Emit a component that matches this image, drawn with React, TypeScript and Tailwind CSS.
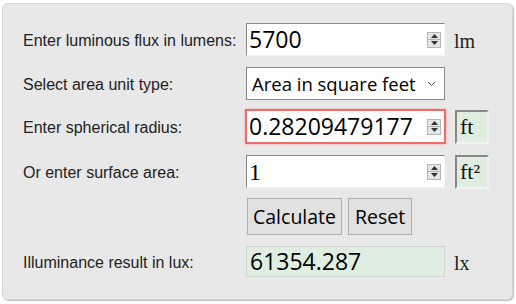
import { ReactNode } from 'react';

// Little up/down stepper like the native number input one
function Spinner() {
    return (
        <div className="flex h-[16px] w-[14px] flex-col border border-[#b5b5b5] bg-[#e6e6e6]">
            <div className="flex flex-1 items-center justify-center border-b border-[#b5b5b5]">
                <svg width="7" height="4" viewBox="0 0 7 4"><path d="M3.5 0L7 4H0z" fill="#333" /></svg>
            </div>
            <div className="flex flex-1 items-center justify-center">
                <svg width="7" height="4" viewBox="0 0 7 4"><path d="M0 0H7L3.5 4z" fill="#333" /></svg>
            </div>
        </div>
    );
}

function Label({ children }: { children: ReactNode }) {
    return <div className="w-[243px] shrink-0 pt-[3px] pl-[20px] text-[16px] text-[#222]">{children}</div>;
}

function Unit({ children }: { children: ReactNode }) {
    return <div className="pl-[9px] pt-[3px] font-['Liberation_Serif',serif] text-[20px] text-[#222]">{children}</div>;
}

function UnitBox({ children }: { children: ReactNode }) {
    return (
        <div className="ml-[10px] flex h-[34px] w-[34px] items-center border-2 border-t-[#888] border-l-[#888] border-r-[#f2f2f2] border-b-[#f2f2f2] bg-[#dfeee0] pl-[3px] font-['Liberation_Serif',serif] text-[22px] leading-none text-[#111]">
            {children}
        </div>
    );
}

function NumberBox({ value, focused, serif }: { value: string; focused?: boolean; serif?: boolean }) {
    return (
        <div
            className={
                focused
                    ? 'flex h-[35px] w-[201px] items-center -mx-[1px] border-2 border-[#f06a6a] bg-white pl-[2px] pr-[3px] shadow-[0_0_2px_#f4a0a0]'
                    : 'flex h-[33px] w-[199px] items-center border border-t-[#8a8a8a] border-l-[#8a8a8a] border-r-[#f4f4f4] border-b-[#f4f4f4] bg-white pl-[2px] pr-[3px]'
            }
        >
            <span
                className={
                    serif
                        ? "flex-1 font-['Liberation_Serif',serif] text-[24px] leading-none text-black"
                        : "flex-1 font-['Open_Sans',sans-serif] text-[23px] leading-none text-black"
                }
            >
                {value}
            </span>
            <Spinner />
        </div>
    );
}

export default function App() {
    return (
        <div className="min-h-[304px] bg-white pl-[2px] pt-[3px] font-['Liberation_Sans',Arial,sans-serif]">
            <div className="flex h-[297px] w-[511px] flex-col rounded-[6px] border border-[#d6d6d6] bg-[#e8e8e8] pt-[19px] shadow-[1px_1px_1px_#bdbdbd]">
                <div className="flex h-[33px] items-center">
                    <Label>Enter luminous flux in lumens:</Label>
                    <NumberBox value="5700" />
                    <Unit>lm</Unit>
                </div>

                <div className="mt-[11px] flex h-[33px] items-center">
                    <Label>Select area unit type:</Label>
                    <div className="flex h-[33px] w-[199px] items-center border border-[#8a8a8a] bg-white pl-[5px] pr-[8px]">
                        <span className="flex-1 font-['Open_Sans',sans-serif] text-[18.5px] text-black">Area in square feet</span>
                        <svg width="9" height="6" viewBox="0 0 9 6">
                            <path d="M1 1l3.5 3.5L8 1" fill="none" stroke="#555" strokeWidth="1" />
                        </svg>
                    </div>
                </div>

                <div className="mt-[10px] flex h-[33px] items-center">
                    <Label>Enter spherical radius:</Label>
                    <NumberBox value="0.28209479177" focused />
                    <UnitBox>ft</UnitBox>
                </div>

                <div className="mt-[12px] flex h-[33px] items-center">
                    <Label>Or enter surface area:</Label>
                    <NumberBox value="1" serif />
                    <UnitBox>ft²</UnitBox>
                </div>

                <div className="mt-[10px] flex h-[37px] items-center">
                    <div className="w-[244px] shrink-0" />
                    <div className="flex gap-[6px] font-['Open_Sans',sans-serif] text-[19.5px] text-black">
                        <button className="h-[37px] w-[95px] border border-[#adadad] bg-[#e1e1e1]">Calculate</button>
                        <button className="h-[37px] w-[64px] border border-[#adadad] bg-[#e1e1e1]">Reset</button>
                    </div>
                </div>

                <div className="mt-[11px] flex h-[31px] items-center">
                    <Label>Illuminance result in lux:</Label>
                    <div className="flex h-[31px] w-[199px] items-center border border-[#cfd6cf] bg-[#dfeee0] pl-[3px] font-['Open_Sans',sans-serif] text-[23px] leading-none text-black">
                        61354.287
                    </div>
                    <Unit>lx</Unit>
                </div>
            </div>
        </div>
    );
}
